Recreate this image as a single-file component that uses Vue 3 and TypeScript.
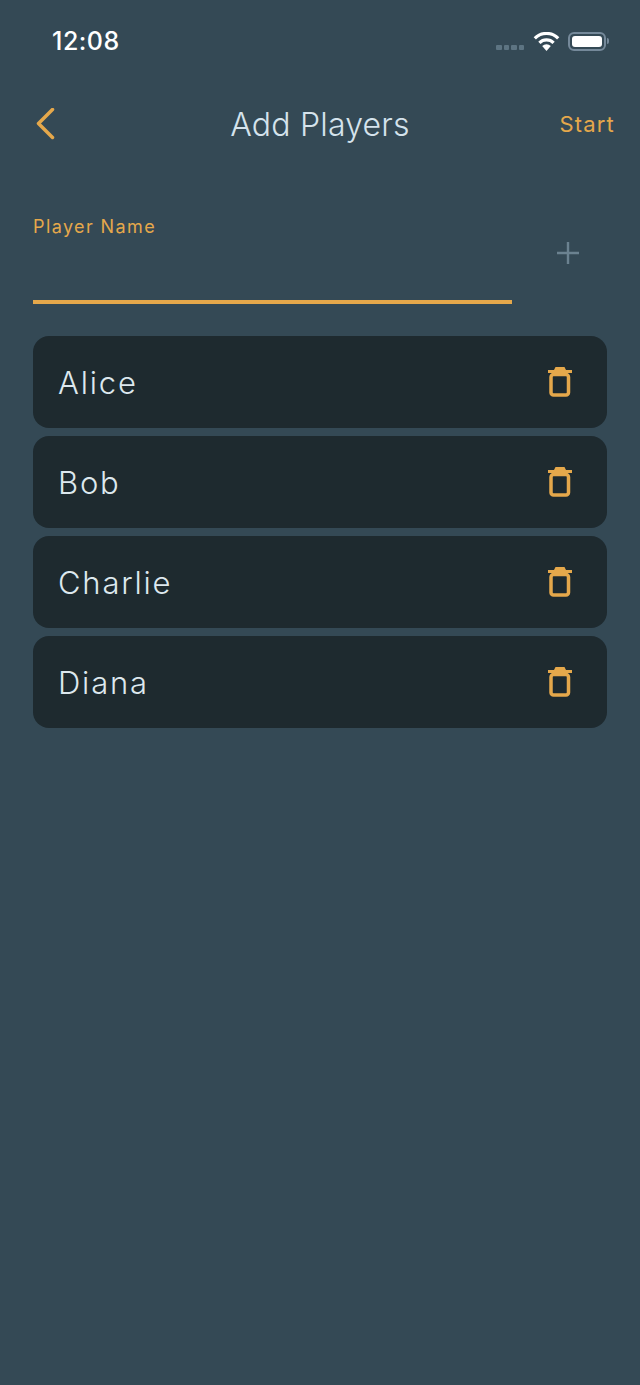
<script setup lang="ts">
import { ref } from "vue";

const players = ref<string[]>(["Alice", "Bob", "Charlie", "Diana"]);
</script>

<template>
  <div class="screen">
    <div class="status-bar">
      <span class="time">12:08</span>
      <div class="status-icons">
        <div class="signal"><i></i><i></i><i></i><i></i></div>
        <svg class="wifi" width="27" height="19" viewBox="0 0 27 19">
          <path d="M1.800 6.300A16.500 16.500 0 0 1 25.200 6.300" fill="none" stroke="#fff" stroke-width="3.200" />
          <path d="M6.400 10.900A10 10 0 0 1 20.600 10.900" fill="none" stroke="#fff" stroke-width="3.200" />
          <path d="M13.500 19L9.200 14A6.500 6.500 0 0 1 17.800 14z" fill="#fff" />
        </svg>
        <div class="battery"><span class="level"></span></div>
        <span class="battery-cap"></span>
      </div>
    </div>

    <header class="nav">
      <svg class="back" width="20" height="32" viewBox="0 0 20 32">
        <path d="M17.500 1.500L3.500 15.500L17.500 29.500" fill="none" stroke="#e5a84b" stroke-width="3.500" stroke-linecap="round" stroke-linejoin="round" />
      </svg>
      <h1>Add Players</h1>
      <span class="start">Start</span>
    </header>

    <div class="add-row">
      <div class="field">
        <label>Player Name</label>
        <div class="line"></div>
      </div>
      <svg class="plus" width="24" height="24" viewBox="0 0 24 24">
        <path d="M12 1v22M1 12h22" stroke="#6b8290" stroke-width="2.400" fill="none" />
      </svg>
    </div>

    <div class="list">
      <div class="player" v-for="name in players" :key="name">
        <span class="name">{{ name }}</span>
        <svg class="trash" width="24" height="32" viewBox="0 0 24 32">
          <path d="M7.500 1h9l1.500 3h6v3h-24v-3h6z" fill="#e5a84b" />
          <rect x="3" y="8.500" width="17.500" height="20.500" rx="2.500" fill="none" stroke="#e5a84b" stroke-width="3.500" />
        </svg>
      </div>
    </div>
  </div>
</template>

<style scoped>
.screen {
  width: 640px;
  height: 1385px;
  background: #344955;
  font-family: Inter, "Liberation Sans", sans-serif;
  overflow: hidden;
}

.status-bar {
  height: 82px;
  display: flex;
  align-items: center;
  justify-content: space-between;
  box-sizing: border-box;
  padding: 0 31px 0 52px;
}

.time {
  color: #fff;
  font-size: 25px;
  font-weight: 500;
  letter-spacing: 0.5px;
}

.status-icons {
  display: flex;
  align-items: center;
}

.signal {
  display: flex;
  gap: 2px;
  margin-top: 13px;
  margin-right: 9px;
}

.signal i {
  width: 5.500px;
  height: 5px;
  border-radius: 1px;
  background: #5d7482;
}

.wifi {
  margin-right: 8px;
}

.battery {
  width: 38px;
  height: 19px;
  box-sizing: border-box;
  border: 2px solid #75899a;
  border-radius: 6px;
  padding: 2px;
}

.level {
  display: block;
  height: 100%;
  background: #fff;
  border-radius: 3px;
}

.battery-cap {
  width: 2px;
  height: 6px;
  margin-left: 1px;
  background: #75899a;
  border-radius: 0 2px 2px 0;
}

.nav {
  height: 84px;
  display: grid;
  grid-template-columns: 1fr auto 1fr;
  align-items: center;
  padding: 0 25px 0 35px;
  box-sizing: border-box;
  width: 640px;
}

.back {
  flex: none;
}

h1 {
  margin: 0 0 0 -10px;
  color: #d5e3ec;
  font-size: 32px;
  font-weight: 300;
  letter-spacing: 0.2px;
}

.start {
  justify-self: end;
  color: #e5a84b;
  font-size: 22px;
  font-weight: 400;
  letter-spacing: 1.200px;
}

.add-row {
  display: flex;
  align-items: flex-start;
  padding: 0 60px 0 33px;
  margin-top: 49px;
}

.field {
  width: 479px;
}

.field label {
  display: block;
  color: #e5a84b;
  font-size: 18px;
  letter-spacing: 1.400px;
  line-height: 24px;
}

.line {
  height: 4px;
  margin-top: 61px;
  background: #e5a84b;
}

.plus {
  margin-left: 44px;
  margin-top: 26px;
}

.list {
  display: flex;
  flex-direction: column;
  gap: 8px;
  margin: 32px 33px 0;
}

.player {
  height: 92px;
  display: flex;
  align-items: center;
  justify-content: space-between;
  padding: 0 35px 0 25px;
  background: #1e2a2f;
  border-radius: 16px;
}

.name {
  color: #dde8ee;
  font-size: 31px;
  font-weight: 300;
  letter-spacing: 1.800px;
}
</style>
